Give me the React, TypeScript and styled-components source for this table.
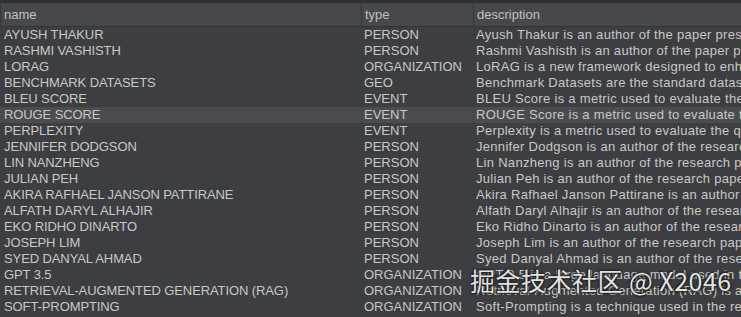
import React from 'react'
import styled, { createGlobalStyle } from 'styled-components'

const rows: [string, string, string][] = [
  ['AYUSH THAKUR', 'PERSON', 'Ayush Thakur is an author of the paper presenting LoRAG'],
  ['RASHMI VASHISTH', 'PERSON', 'Rashmi Vashisth is an author of the paper presenting LoRAG'],
  ['LORAG', 'ORGANIZATION', 'LoRAG is a new framework designed to enhance text generation'],
  ['BENCHMARK DATASETS', 'GEO', 'Benchmark Datasets are the standard datasets used'],
  ['BLEU SCORE', 'EVENT', 'BLEU Score is a metric used to evaluate the quality'],
  ['ROUGE SCORE', 'EVENT', 'ROUGE Score is a metric used to evaluate the quality'],
  ['PERPLEXITY', 'EVENT', 'Perplexity is a metric used to evaluate the quality'],
  ['JENNIFER DODGSON', 'PERSON', 'Jennifer Dodgson is an author of the research paper'],
  ['LIN NANZHENG', 'PERSON', 'Lin Nanzheng is an author of the research paper'],
  ['JULIAN PEH', 'PERSON', 'Julian Peh is an author of the research paper'],
  ['AKIRA RAFHAEL JANSON PATTIRANE', 'PERSON', 'Akira Rafhael Janson Pattirane is an author of the paper'],
  ['ALFATH DARYL ALHAJIR', 'PERSON', 'Alfath Daryl Alhajir is an author of the research paper'],
  ['EKO RIDHO DINARTO', 'PERSON', 'Eko Ridho Dinarto is an author of the research paper'],
  ['JOSEPH LIM', 'PERSON', 'Joseph Lim is an author of the research paper'],
  ['SYED DANYAL AHMAD', 'PERSON', 'Syed Danyal Ahmad is an author of the research paper'],
  ['GPT 3.5', 'ORGANIZATION', 'GPT 3.5 is a large language model used in the study'],
  ['RETRIEVAL-AUGMENTED GENERATION (RAG)', 'ORGANIZATION', 'Retrieval-Augmented Generation (RAG) is a method'],
  ['SOFT-PROMPTING', 'ORGANIZATION', 'Soft-Prompting is a technique used in the research'],
]

const GlobalStyle = createGlobalStyle`
  html, body {
    margin: 0;
    padding: 0;
    background: #3c3e41;
    overflow: hidden;
  }
`

const Frame = styled.div`
  position: relative;
  width: 741px;
  height: 317px;
  overflow: hidden;
  background: #3c3e41;
  border-top: 3px solid #2e3032;
  box-sizing: border-box;
  font-family: 'Liberation Sans', Arial, sans-serif;
  font-size: 13px;
`

const Grid = styled.div`
  display: grid;
  grid-template-columns: 361px 112px 400px;
`

const HeadCell = styled.div`
  height: 23px;
  line-height: 23px;
  padding-left: 3px;
  background: #46484b;
  color: #c0c0c0;
  border-left: 1px solid #36383a;
  border-bottom: 1px solid #323436;
  white-space: nowrap;
`

const Cell = styled.div<{ $selected?: boolean; $first?: boolean; $wide?: boolean }>`
  height: 16px;
  line-height: 16px;
  padding-left: ${(p) => (p.$first ? '3px' : '2px')};
  letter-spacing: ${(p) => (p.$wide ? '0.3px' : p.$first ? '-0.1px' : '0')};
  color: #c8c8c8;
  background: ${(p) => (p.$selected ? '#4a4c4f' : 'transparent')};
  border-left: 1px solid ${(p) => (p.$selected && !p.$first ? '#424447' : 'transparent')};
  white-space: nowrap;
  overflow: hidden;
`

const Watermark = styled.div`
  position: absolute;
  left: 470px;
  top: 259px;
  font-family: 'Noto Sans CJK SC', 'Liberation Sans', sans-serif;
  font-size: 25px;
  letter-spacing: 0.5px;
  color: rgba(255, 255, 255, 0.88);
  text-shadow: 0 0 2px #202020, 1px 1px 2px #202020, -1px -1px 2px #202020;
  white-space: nowrap;
`

export default function App() {
  return (
    <Frame>
      <GlobalStyle />
      <Grid>
        <HeadCell>name</HeadCell>
        <HeadCell>type</HeadCell>
        <HeadCell>description</HeadCell>
        {rows.map(([name, type, desc], i) => {
          const sel = i === 5
          return (
            <React.Fragment key={name}>
              <Cell $first $selected={sel}>{name}</Cell>
              <Cell $selected={sel}>{type}</Cell>
              <Cell $wide $selected={sel}>{desc}</Cell>
            </React.Fragment>
          )
        })}
      </Grid>
      <Watermark>掘金技术社区 @ X2046</Watermark>
    </Frame>
  )
}
